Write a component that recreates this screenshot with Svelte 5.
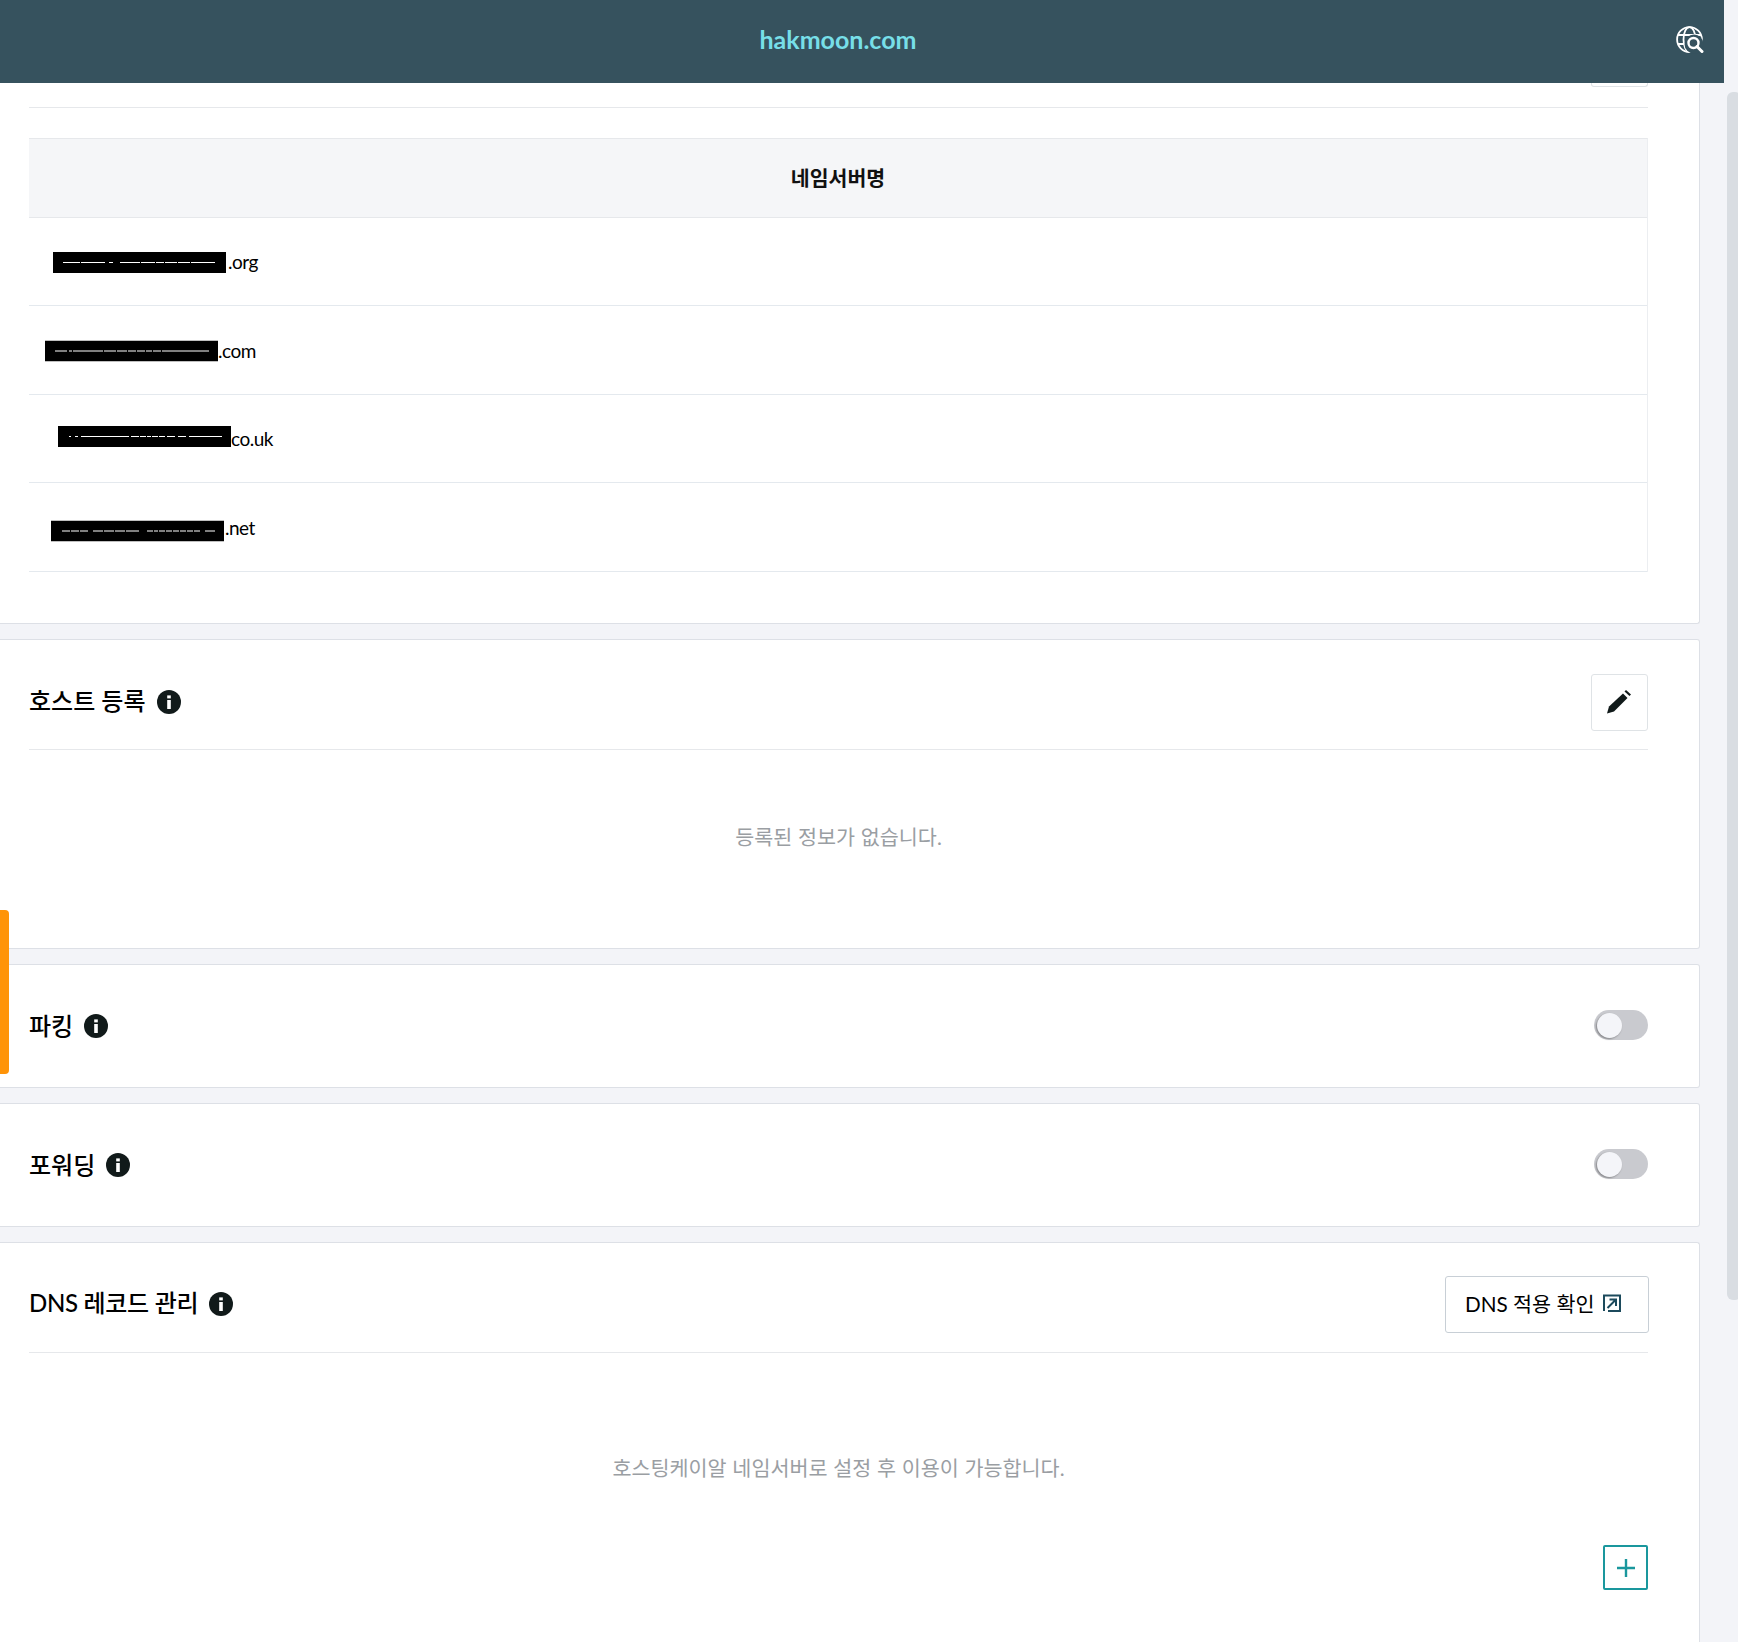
<script>
	// nameserver rows: x offset, row height and nudges of each masked host
	const nameservers = [
		{ tld: '.org', x: 24, h: 88, dy: 1, ty: -1, tx: 2, x1: 10, dash: '17 1 24 4 4 7 20 1 14 1 8 1 12 1 12 1 24' },
		{ tld: '.com', x: 16, h: 89, dy: 0.5, ty: -1, tx: 0, x1: 10, dash: '12 2 3 1 30 1 12 1 10 1 8 1 8 1 6 1 8 1 47' },
		{ tld: 'co.uk', x: 29, h: 88, dy: -2, ty: 2, tx: 0, x1: 11, dash: '2 4 3 3 48 2 8 1 6 1 4 1 6 1 6 2 8 3 8 3 33' },
		{ tld: '.net', x: 22, h: 89, dy: 3.5, ty: -4, tx: 1, x1: 11, dash: '8 1 8 1 8 5 10 1 10 1 10 1 13 8 6 1 4 1 6 1 6 1 6 1 6 1 6 1 6 5 10' }
	];
</script>

<div class="page">
	<div class="main">
		<header class="topbar">
			<div class="logo">hakmoon.com</div>
			<svg class="globe" width="28" height="28" viewBox="0 0 28 28" fill="none" stroke="#fff" stroke-width="1.8">
				<circle cx="13.5" cy="13.5" r="12.4" />
				<ellipse cx="13.5" cy="13.5" rx="6" ry="12.4" />
				<path d="M2 9h23M2 18h23" />
				<circle cx="18" cy="18" r="9.5" fill="#36525e" stroke="none" />
				<circle cx="17.5" cy="17" r="5" stroke-width="2.4" />
				<path d="M21 20.5l5 5" stroke-width="3" stroke-linecap="round" />
			</svg>
		</header>

		<section class="card first">
			<div class="peek"><div class="peek-btn"></div></div>
			<div class="table">
				<div class="thead">네임서버명</div>
				{#each nameservers as ns}
					<div class="row" style="height: {ns.h}px">
						<span class="host" style="margin-left: {ns.x}px; transform: translateY({ns.dy}px)">
							<svg class="mask" width="173" height="21" viewBox="0 0 173 21">
								<rect width="173" height="21" fill="#000" />
								<line x1={ns.x1} y1="10.5" x2="164" y2="10.5" stroke="#fff" stroke-dasharray={ns.dash} />
							</svg><span style="transform: translate({ns.tx}px, {ns.ty}px)">{ns.tld}</span>
						</span>
					</div>
				{/each}
			</div>
		</section>

		<section class="card host-card">
			<div class="head">
				<h2>호스트 등록</h2>
				<svg class="info" width="24" height="24" viewBox="0 0 24 24">
					<circle cx="12" cy="12" r="12" fill="#111a1a" />
					<rect x="10.2" y="10" width="3.6" height="9" fill="#fff" />
					<rect x="10.2" y="5.4" width="3.6" height="3" fill="#fff" />
				</svg>
				<button class="icon-btn" aria-label="수정">
					<svg width="24" height="24" viewBox="0 0 24 24" fill="#111a1a">
						<path d="M0 23.5L2 16.5 16 3.5 20.5 8 7 21.5z" />
						<path d="M17.5 1.5l1.5-1.5 5 4.5-1.5 1.5z" />
					</svg>
				</button>
			</div>
			<p class="empty host-empty">등록된 정보가 없습니다.</p>
		</section>

		<section class="card toggle-card">
			<h2>파킹</h2>
			<svg class="info" width="24" height="24" viewBox="0 0 24 24">
				<circle cx="12" cy="12" r="12" fill="#111a1a" />
				<rect x="10.2" y="10" width="3.6" height="9" fill="#fff" />
				<rect x="10.2" y="5.4" width="3.6" height="3" fill="#fff" />
			</svg>
			<div class="toggle"><span class="knob"></span></div>
		</section>

		<section class="card toggle-card">
			<h2>포워딩</h2>
			<svg class="info" width="24" height="24" viewBox="0 0 24 24">
				<circle cx="12" cy="12" r="12" fill="#111a1a" />
				<rect x="10.2" y="10" width="3.6" height="9" fill="#fff" />
				<rect x="10.2" y="5.4" width="3.6" height="3" fill="#fff" />
			</svg>
			<div class="toggle"><span class="knob"></span></div>
		</section>

		<section class="card dns-card">
			<div class="head dns-head">
				<h2>DNS 레코드 관리</h2>
				<svg class="info" width="24" height="24" viewBox="0 0 24 24">
					<circle cx="12" cy="12" r="12" fill="#111a1a" />
					<rect x="10.2" y="10" width="3.6" height="9" fill="#fff" />
					<rect x="10.2" y="5.4" width="3.6" height="3" fill="#fff" />
				</svg>
				<button class="dns-btn">
					DNS 적용 확인
					<svg width="18" height="18" viewBox="0 0 18 18" fill="none" stroke="#1c4a5c">
						<path d="M1 17V1.5h16V17H5" stroke-width="2" />
						<path d="M4.5 14L13 5.5M6.5 5.5h6.5v6.5" stroke-width="2" />
					</svg>
				</button>
			</div>
			<p class="empty dns-empty">호스팅케이알 네임서버로 설정 후 이용이 가능합니다.</p>
			<div class="add-wrap">
				<button class="add-btn" aria-label="추가">
					<svg width="18" height="18" viewBox="0 0 18 18" stroke="#1a979d" stroke-width="2.4">
						<path d="M0 9h18M9 0v18" />
					</svg>
				</button>
			</div>
		</section>
	</div>

	<div class="scrollbar"><div class="thumb"></div></div>
	<div class="side-tab"></div>
</div>

<style>
	:global(body) {
		margin: 0;
		overflow: hidden;
		background: #f3f4f8;
	}

	.page {
		position: relative;
		display: grid;
		grid-template-columns: 1724px 14px;
		height: 1642px;
		overflow: hidden;
		font-family: Lato, "Noto Sans CJK KR", sans-serif;
		color: #000;
	}

	.main {
		display: flex;
		flex-direction: column;
		gap: 15px;
		height: 1642px;
	}

	.topbar {
		display: grid;
		grid-template-columns: 1676px 1fr;
		align-items: center;
		height: 83px;
		margin-bottom: -15px;
		background: #36525e;
	}

	.logo {
		padding-bottom: 5px;
		text-align: center;
		font-size: 25px;
		font-weight: 700;
		color: #77dfe8;
	}

	.globe {
		display: block;
		margin-bottom: 4px;
	}

	.card {
		box-sizing: border-box;
		width: 1700px;
		padding: 0 51px 0 29px;
		background: #fff;
		border: 1px solid #dde0e6;
		border-left: none;
		border-radius: 0 3px 3px 0;
	}

	.first {
		height: 541px;
		border-top: none;
		border-radius: 0 0 3px 0;
	}

	.peek {
		display: flex;
		justify-content: flex-end;
		height: 24px;
		border-bottom: 1px solid #e6e8eb;
	}

	.peek-btn {
		width: 57px;
		height: 4px;
		box-sizing: border-box;
		border: 1px solid #dfe3e6;
		border-top: none;
		border-radius: 0 0 3px 3px;
	}

	.table {
		margin-top: 30px;
		border-top: 1px solid #e6e8eb;
		border-right: 1px solid #eceef1;
	}

	.thead {
		display: flex;
		align-items: center;
		justify-content: center;
		height: 79px;
		padding-bottom: 2px;
		box-sizing: border-box;
		background: #f5f6f8;
		border-bottom: 1px solid #e6e8eb;
		font-size: 20.5px;
		font-weight: 700;
		color: #111;
	}

	.row {
		display: flex;
		align-items: center;
		box-sizing: border-box;
		border-bottom: 1px solid #e4e9ee;
	}

	.host {
		display: flex;
		align-items: center;
		font-size: 19px;
		letter-spacing: -0.5px;
		color: #000;
	}

	.mask {
		display: block;
	}

	.head {
		display: flex;
		align-items: center;
		padding: 34px 0 18px;
		border-bottom: 1px solid #e6e8eb;
	}

	h2 {
		margin: 0 0 3px;
		font-size: 24px;
		font-weight: 500;
		color: #000;
	}

	.head h2 {
		margin-bottom: 6px;
	}

	.info {
		display: block;
		margin-left: 11px;
		flex: none;
	}

	.head .info {
		margin: 0 0 2px 12px;
	}

	.icon-btn {
		display: flex;
		align-items: center;
		justify-content: center;
		width: 57px;
		height: 57px;
		margin-left: auto;
		padding: 0 2px 2px 0;
		background: #fff;
		border: 1px solid #dfe3e6;
		border-radius: 3px;
	}

	.empty {
		margin: 0;
		text-align: center;
		font-size: 20.7px;
		word-spacing: 0.4px;
		color: #9a9ea3;
	}

	.host-card {
		height: 310px;
	}

	.host-empty {
		margin-top: 71px;
	}

	.toggle-card {
		display: flex;
		align-items: center;
		height: 124px;
	}

	.toggle {
		position: relative;
		width: 54px;
		height: 30px;
		margin: 0 0 2px auto;
		background: #c9cacf;
		border-radius: 15px;
	}

	.knob {
		position: absolute;
		top: 2.5px;
		left: 2.5px;
		width: 25px;
		height: 25px;
		background: #f4f5f9;
		border-radius: 50%;
		box-shadow: -1px 1px 2px rgba(0, 0, 0, 0.35);
	}

	.dns-card {
		flex: 1;
		border-bottom: none;
		border-radius: 0 3px 0 0;
	}

	.dns-head {
		padding: 33px 0 19px;
	}

	.dns-head h2 {
		letter-spacing: -0.3px;
	}

	.dns-head .info {
		margin-left: 11px;
	}

	.dns-btn {
		display: flex;
		align-items: center;
		gap: 9px;
		box-sizing: border-box;
		width: 204px;
		height: 57px;
		margin: 0 -1px 0 auto;
		padding: 0 0 3px 19px;
		background: #fff;
		border: 1px solid #c8cfd6;
		border-radius: 3px;
		font-family: inherit;
		font-size: 20.7px;
		color: #000;
	}

	.dns-empty {
		margin-top: 99px;
	}

	.add-wrap {
		display: flex;
		justify-content: flex-end;
		margin-top: 63px;
	}

	.add-btn {
		display: flex;
		align-items: center;
		justify-content: center;
		box-sizing: border-box;
		width: 45px;
		height: 45px;
		padding: 0;
		background: #fff;
		border: 2px solid #1a979d;
		border-radius: 2px;
	}

	.scrollbar {
		background: #f3f4f8;
	}

	.thumb {
		width: 14px;
		height: 1208px;
		margin: 92px 0 0 3px;
		background: #d9dde2;
		border-radius: 6px;
	}

	.side-tab {
		position: absolute;
		top: 910px;
		left: 0;
		width: 9px;
		height: 164px;
		background: #ff9408;
		border-radius: 0 4px 4px 0;
	}
</style>
